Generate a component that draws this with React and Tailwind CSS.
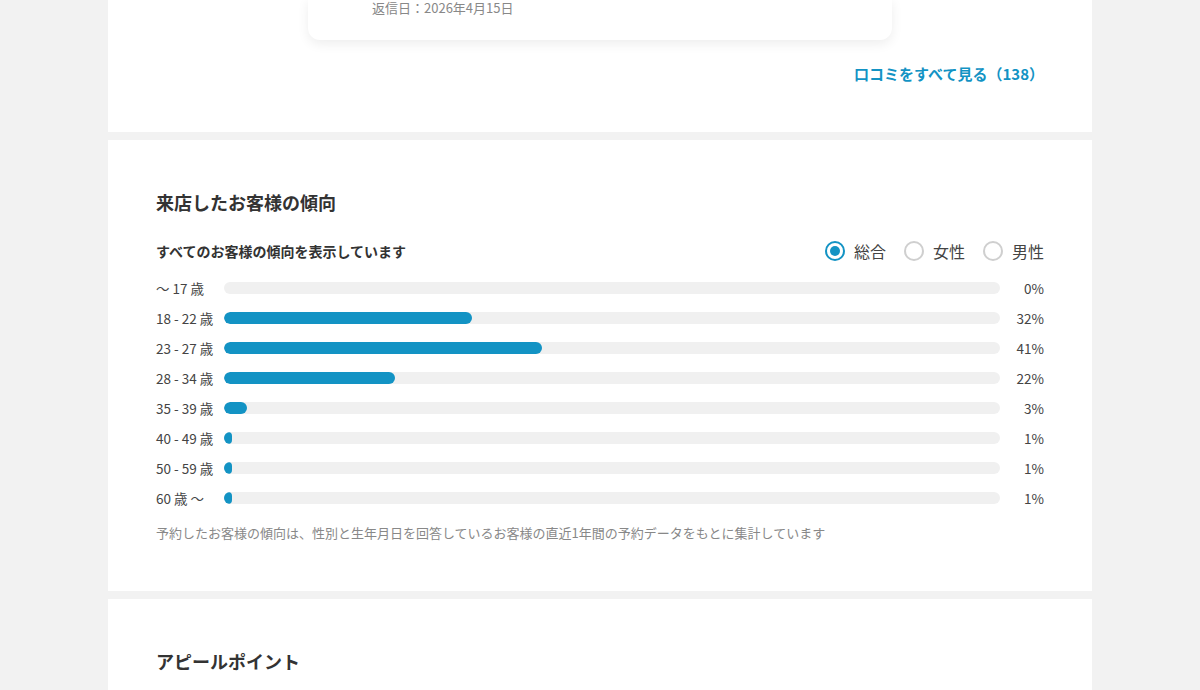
const rows=[["〜 17 歳",0],["18 - 22 歳",32],["23 - 27 歳",41],["28 - 34 歳",22],["35 - 39 歳",3],["40 - 49 歳",1],["50 - 59 歳",1],["60 歳 〜",1]];
function Radio({on,label}){return <div className="flex items-center gap-[9px]"><span className={"w-[20px] h-[20px] rounded-full border-2 flex items-center justify-center "+(on?"border-[#1393c4]":"border-[#cfcfcf]")}>{on&&<span className="w-[10px] h-[10px] rounded-full bg-[#1393c4]"/>}</span><span className="text-[16px] text-[#444]">{label}</span></div>}
export default function App(){return(
<div className="bg-[#f2f2f2] w-[1200px] h-[690px] overflow-hidden" style={{fontFamily:'"Noto Sans CJK JP","Noto Sans",sans-serif'}}>
<div className="mx-[108px] flex flex-col gap-[8px]">
<div className="bg-white px-[48px] pb-[48px]">
<div className="mx-[152px] -mt-[2px] bg-white rounded-b-[12px] shadow-[0_4px_12px_rgba(0,0,0,0.07)] pb-[22px] pl-[64px]"><div className="h-[20px] leading-[20px] text-[13px] text-[#888]">返信日：2026年4月15日</div></div>
<div className="mt-[24px] h-[20px] leading-[20px] text-right text-[15px] font-bold text-[#1393c4]">口コミをすべて見る（138）</div>
</div>
<div className="bg-white px-[48px] pt-[48px] pb-[48px]">
<div className="h-[28px] leading-[28px] text-[18px] font-bold text-[#333]">来店したお客様の傾向</div>
<div className="mt-[23px] h-[24px] flex items-center justify-between"><span className="text-[14px] font-bold text-[#333]">すべてのお客様の傾向を表示しています</span><div className="flex gap-[18px]"><Radio on label="総合"/><Radio label="女性"/><Radio label="男性"/></div></div>
<div className="mt-[10px]">{rows.map(([l,p])=>(
<div key={l} className="h-[30px] flex items-center"><span className="w-[68px] text-[13.5px] text-[#444]">{l}</span><div className="w-[776px] h-[12px] rounded-full bg-[#f0f0f0] overflow-hidden"><div className="h-full rounded-full bg-[#1393c4]" style={{width:p===0?0:Math.max(8,776*p/100)}}/></div><span className="flex-1 text-right text-[13.5px] text-[#444]">{p}%</span></div>))}</div>
<div className="mt-[10px] h-[20px] leading-[20px] text-[13px] text-[#888]">予約したお客様の傾向は、性別と生年月日を回答しているお客様の直近1年間の予約データをもとに集計しています</div>
</div>
<div className="bg-white px-[48px] pt-[48px] h-[200px]"><div className="h-[28px] leading-[28px] text-[18px] font-bold text-[#333]">アピールポイント</div></div>
</div></div>)}
